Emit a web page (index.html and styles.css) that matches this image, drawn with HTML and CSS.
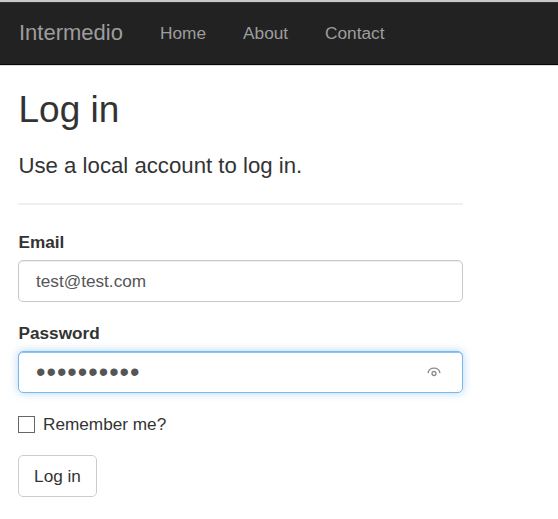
FILE: index.html
```
<!DOCTYPE html>
<html lang="en">
<head>
<meta charset="utf-8">
<title>Log in</title>
<link rel="stylesheet" href="styles.css">
</head>
<body>
<nav class="navbar">
  <a class="brand" href="#">Intermedio</a>
  <a class="nav-link home" href="#">Home</a>
  <a class="nav-link about" href="#">About</a>
  <a class="nav-link" href="#">Contact</a>
</nav>
<main class="content">
  <h2>Log in</h2>
  <h4>Use a local account to log in.</h4>
  <hr>
  <form>
    <label class="field-label" for="email">Email</label>
    <div class="control"><input id="email" type="text" value="test@test.com"></div>
    <label class="field-label" for="password">Password</label>
    <div class="control focused">
      <input id="password" class="password" type="password" value="abcdefghij">
      <svg class="reveal" width="14" height="10" viewBox="0 0 14 10" fill="none" stroke="#8c8c8c" stroke-width="1.3">
        <path d="M1 6.2C1.5 3.2 3.9 1.2 7 1.2S12.5 3.2 13 6.2"/>
        <circle cx="7" cy="6.5" r="2"/>
      </svg>
    </div>
    <label class="remember"><input class="check" type="checkbox"><span>Remember me?</span></label>
    <button class="btn" type="button">Log in</button>
  </form>
</main>
</body>
</html>
```
FILE: styles.css
```
* { box-sizing: border-box; }
body {
  margin: 0;
  height: 519px;
  overflow: hidden;
  border-top: 2px solid #c8c9ca;
  background: #fff;
  color: #333;
  font: 17.2px/24px "Liberation Sans", Arial, sans-serif;
}
.navbar {
  display: flex;
  align-items: center;
  height: 63px;
  padding: 0 0 1px 19px;
  background: #222;
  border-top: 1px solid #333436;
  border-bottom: 1px solid #080808;
  box-shadow: 0 1px 0 #ddd;
}
.navbar a { color: #9d9d9d; text-decoration: none; }
.navbar .brand { width: 141px; font-size: 22px; }
.nav-link { font-size: 17.3px; }
.home { width: 83px; }
.about { width: 82px; }
.content { width: 463px; padding-left: 18px; }
h2 { margin: 25px 0 0; font-size: 37px; line-height: 40px; font-weight: 400; }
h4 { margin: 24px 0 0; font-size: 22.2px; line-height: 24px; font-weight: 400; }
h2, h4, .field-label { padding-left: .5px; }
hr { margin: 25px 0; border: 0; height: 2px; background: #f0f0f0; }
form { display: flex; flex-direction: column; align-items: flex-start; }
.field-label { height: 24px; margin-bottom: 6px; font-weight: 700; }
.control {
  display: flex;
  align-items: center;
  width: 445px;
  height: 42px;
  margin-bottom: 19px;
  padding: 0 20px 0 17px;
  border: 1px solid #c8c8c8;
  border-radius: 5px;
  box-shadow: inset 0 1px 1px rgba(0, 0, 0, .075);
}
.control input {
  flex: 1;
  min-width: 0;
  padding: 0;
  border: 0;
  outline: 0;
  background: none;
  color: #555;
  font: inherit;
}
.focused {
  padding: 0 21px 0 17px;
  border-color: #78b8ee;
  box-shadow: inset 0 1px 0 #8fc5f2, 0 0 9px rgba(102, 175, 233, .5);
}
.control .password { height: 34px; font-size: 27px; letter-spacing: 1px; }
.remember { display: flex; align-items: center; height: 24px; }
.check {
  appearance: none;
  width: 17px;
  height: 17px;
  margin: 1px 8px 0 0;
  border: 1px solid #666;
  background: #fff;
}
.btn {
  width: 79px;
  height: 42px;
  margin-top: 19px;
  padding: 0;
  border: 1px solid #ccc;
  border-radius: 5px;
  background: #fff;
  color: #333;
  font: inherit;
}
```
